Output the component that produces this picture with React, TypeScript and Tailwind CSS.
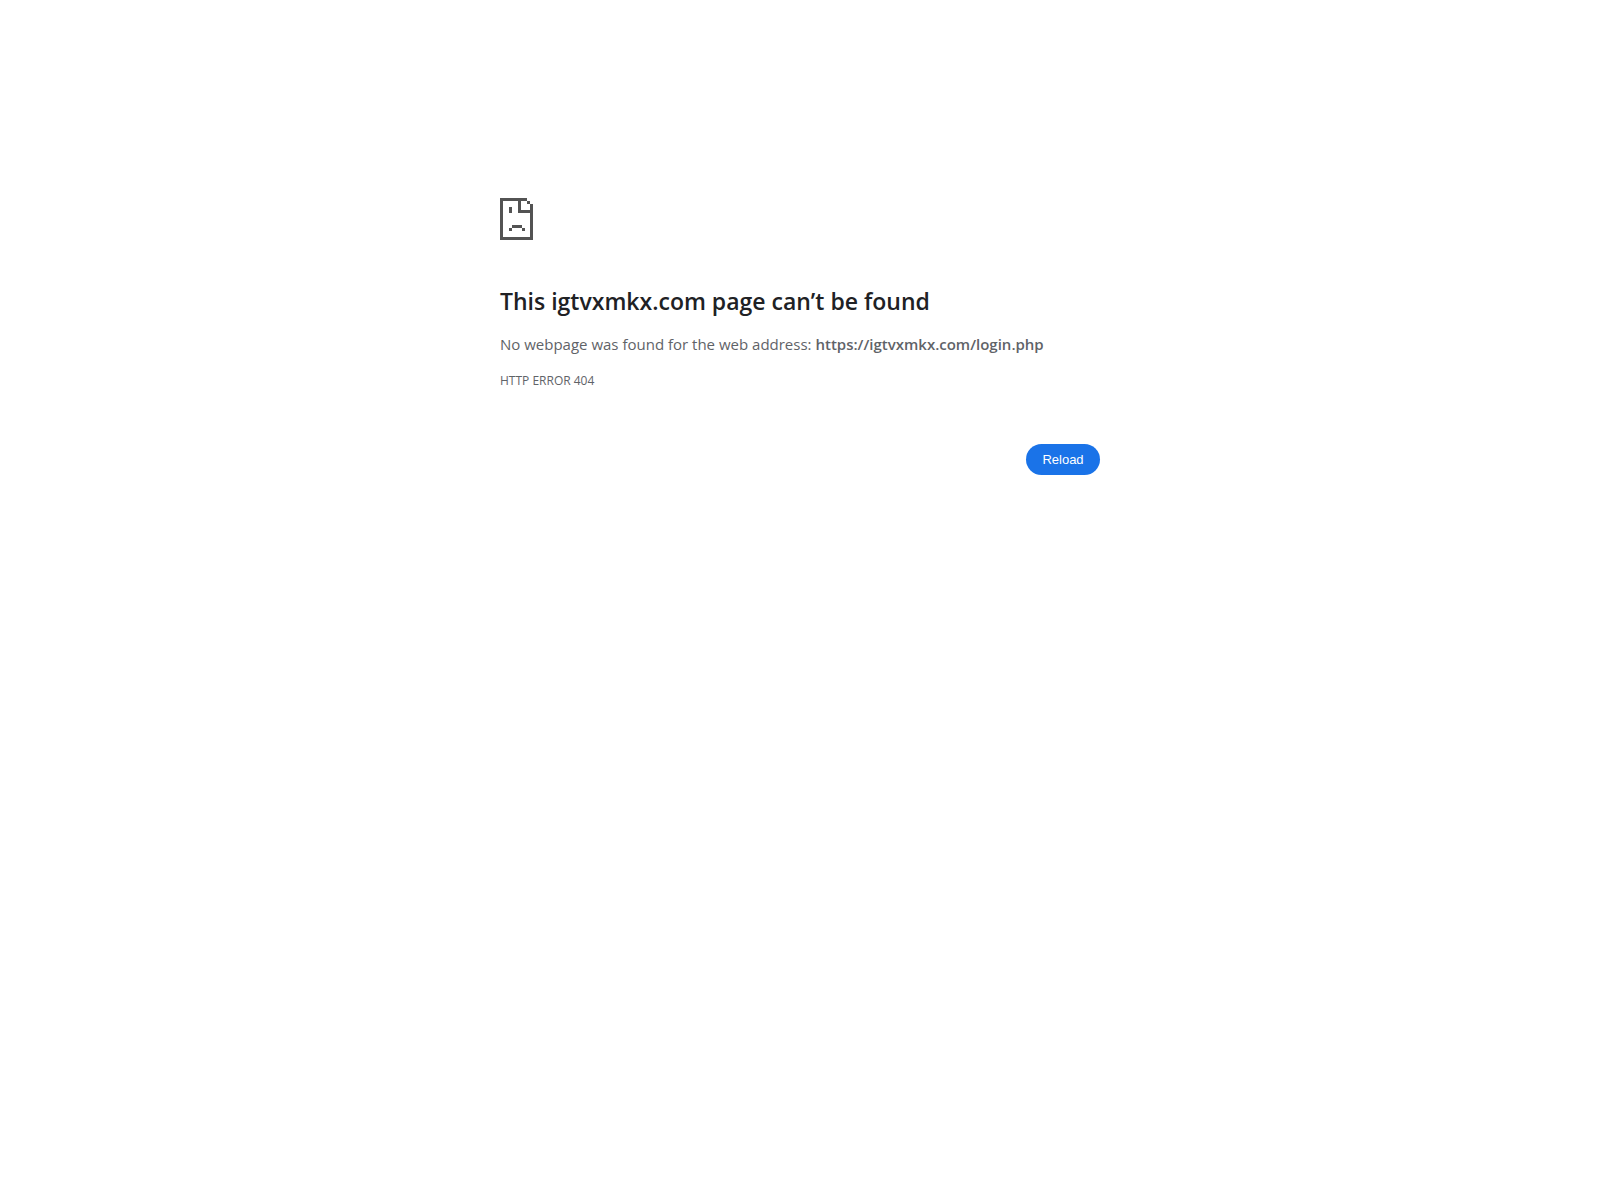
function SadPageIcon() {
  return (
    <svg
      className="h-[42px] w-[33px] text-[#535353]"
      viewBox="0 0 33 42"
      fill="currentColor"
      shapeRendering="crispEdges"
      aria-hidden="true"
    >
      <path
        d="M0 0h27v3H21v9h9V6h3v36H0zM3 3v36h27V15H18V3z"
        fillRule="evenodd"
      />
      <path d="M27 3h3v3h-3zM9 9h3v6H9zM12 27h10v3H12zM9 30h3v3H9zM22 30h3v3h-3z" />
    </svg>
  );
}

export default function App() {
  return (
    <main className="min-h-screen bg-white px-6 font-['Open_Sans','Noto_Sans',sans-serif] text-[#5f6368]">
      <div className="mx-auto max-w-[600px] pt-[198px]">
        <SadPageIcon />
        <h1 className="mt-[46px] text-[23px] leading-[30px] font-semibold text-[#202124]">
          This igtvxmkx.com page can’t be found
        </h1>
        <p className="mt-4 text-[15px] leading-6">
          No webpage was found for the web address:{" "}
          <strong className="font-semibold">https://igtvxmkx.com/login.php</strong>
        </p>
        <p className="mt-[13px] text-[12px] leading-6">HTTP ERROR 404</p>
        <div className="mt-[51px] flex justify-end">
          <button
            type="button"
            className="min-w-[74px] cursor-pointer rounded-[20px] bg-[#1a73e8] px-4 py-2 font-['Liberation_Sans',Arial,sans-serif] text-[13px] leading-[15px] text-white"
          >
            Reload
          </button>
        </div>
      </div>
    </main>
  );
}
